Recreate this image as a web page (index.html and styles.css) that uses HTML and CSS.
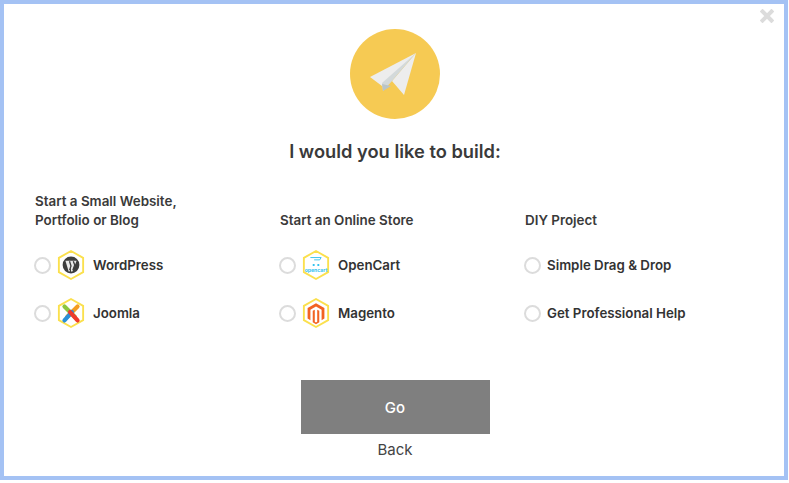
FILE: index.html
```html
<!DOCTYPE html>
<html lang="en">
<head>
<meta charset="utf-8">
<title>Build</title>
<link rel="stylesheet" href="styles.css">
</head>
<body>
<div class="dialog">
  <button class="close" aria-label="Close">
    <svg viewBox="0 0 14 14" width="14" height="14"><path d="M2.5 2.5 11.5 11.5M11.5 2.5 2.5 11.5" stroke="#dcdcdc" stroke-width="4" stroke-linecap="square"/></svg>
  </button>
  <div class="badge">
    <svg viewBox="0 0 90 90" width="90" height="90">
      <circle cx="45" cy="45" r="45" fill="#f6ca53"/>
      <path d="M20 48 66 24 38 53 32 57Z" fill="#ededed"/>
      <path d="M42 52 66 24 54 66Z" fill="#ededed"/>
      <path d="M32 54 66 24 42 52 33 62Z" fill="#d3d9da"/>
      <path d="M32 55 33 62 41 57Z" fill="#b9c4c7"/>
    </svg>
  </div>
  <h1 class="title">I would you like to build:</h1>
  <div class="columns">
    <section class="col">
      <h2 class="col-head">Start a Small Website,<br>Portfolio or Blog</h2>
      <label class="opt">
        <span class="radio"></span>
        <svg class="hex" viewBox="0 0 30 34"><path d="M15 2 28 9.300V24.700L15 32 2 24.700V9.300Z" fill="#fff" stroke="#fbe04d" stroke-width="2"/><circle cx="15" cy="17" r="9" fill="#3d3d3d"/><path d="M9 12.500H21L16.500 24H15L15 18.500 13.500 24H12.500Z" fill="#e9e9e9"/><path d="M13.400 13 15 18 13.500 22.500M17.500 13 19 17 17 22.500" fill="none" stroke="#3d3d3d" stroke-width="1.400"/></svg>
        <span class="opt-label">WordPress</span>
      </label>
      <label class="opt">
        <span class="radio"></span>
        <svg class="hex" viewBox="0 0 30 34"><path d="M15 2 28 9.300V24.700L15 32 2 24.700V9.300Z" fill="#fff" stroke="#fbe04d" stroke-width="2"/><path d="M8 10 19 21" stroke="#8cc63f" stroke-width="4.500" stroke-linecap="round"/><path d="M22 10 11 21" stroke="#f49c1f" stroke-width="4.500" stroke-linecap="round"/><path d="M8 25 16 16" stroke="#2a90d9" stroke-width="4.500" stroke-linecap="round"/><path d="M22 25 14 16" stroke="#ee3b2d" stroke-width="4.500" stroke-linecap="round"/></svg>
        <span class="opt-label">Joomla</span>
      </label>
    </section>
    <section class="col">
      <h2 class="col-head">Start an Online Store</h2>
      <label class="opt">
        <span class="radio"></span>
        <svg class="hex" viewBox="0 0 30 34"><path d="M15 2 28 9.300V24.700L15 32 2 24.700V9.300Z" fill="#fff" stroke="#fbe04d" stroke-width="2"/><path d="M9 9H20.500L19 11.500H13" fill="none" stroke="#35c3ee" stroke-width="1"/><path d="M11.500 16h2v2h-2zM16.500 16h2v2h-2z" fill="#35c3ee"/><text class="oc-text" x="15" y="24" text-anchor="middle">opencart</text></svg>
        <span class="opt-label">OpenCart</span>
      </label>
      <label class="opt">
        <span class="radio"></span>
        <svg class="hex" viewBox="0 0 30 34"><path d="M15 2 28 9.300V24.700L15 32 2 24.700V9.300Z" fill="#fff" stroke="#fbe04d" stroke-width="2"/><path d="M15 6.500 24 11.700V23L21 24.700V13.500L15 10 9 13.500V24.700L6 23V11.700ZM13.700 13.500V26.500L15 27.300 16.300 26.500V13.500L18.500 14.700V27L15 29 11.500 27V14.700Z" fill="#f26322"/></svg>
        <span class="opt-label">Magento</span>
      </label>
    </section>
    <section class="col">
      <h2 class="col-head">DIY Project</h2>
      <label class="opt">
        <span class="radio"></span>
        <span class="opt-label">Simple Drag &amp; Drop</span>
      </label>
      <label class="opt">
        <span class="radio"></span>
        <span class="opt-label">Get Professional Help</span>
      </label>
    </section>
  </div>
  <div class="actions">
    <button class="go">Go</button>
    <a class="back">Back</a>
  </div>
</div>
</body>
</html>
```
FILE: styles.css
```css
* { box-sizing: border-box; }
html, body { margin: 0; padding: 0; background: #fff; }
body { width: 789px; height: 483px; font-family: "Inter", "Liberation Sans", sans-serif; color: #333; }
.dialog {
  position: relative;
  width: 788px;
  height: 480px;
  border: 4px solid #a4c2f4;
  background: #fff;
  padding: 25px 0 0 2px;
}
.close {
  position: absolute;
  top: 5px;
  right: 10px;
  width: 14px;
  height: 14px;
  padding: 0;
  border: 0;
  background: none;
}
.close svg { display: block; }
.badge { display: flex; justify-content: center; }
.badge svg { display: block; }
.title {
  margin: 19px 0 0;
  text-align: center;
  font-size: 18.3px;
  line-height: 26px;
  font-weight: 600;
  color: #3a3a3a;
}
.columns {
  display: grid;
  grid-template-columns: 245px 245px 245px;
  margin: 27px 0 0 29px;
}
.col-head {
  display: flex;
  align-items: flex-end;
  height: 39px;
  margin: 0 0 11px;
  font-size: 13.4px;
  line-height: 19px;
  font-weight: 600;
  color: #3a3a3a;
}
.opt {
  display: flex;
  align-items: center;
  height: 48px;
}
.radio {
  width: 17px;
  height: 17px;
  flex: none;
  border: 2px solid #dcdcdc;
  border-radius: 50%;
  margin: 0 6px 0 -1px;
}
.hex { width: 28px; height: 32px; flex: none; margin-right: 8px; }
.oc-text { font-size: 5.5px; font-weight: 700; fill: #35c3ee; }
.opt-label { font-size: 13.3px; font-weight: 600; color: #333; }
.actions {
  display: flex;
  flex-direction: column;
  align-items: center;
  margin-top: 43px;
}
.go {
  width: 189px;
  height: 54px;
  border: 0;
  background: #7f7f7f;
  color: #fff;
  font: 500 15px "Inter", "Liberation Sans", sans-serif;
}
.back { margin-top: 6px; font-size: 15px; line-height: 19px; color: #444; }
```
